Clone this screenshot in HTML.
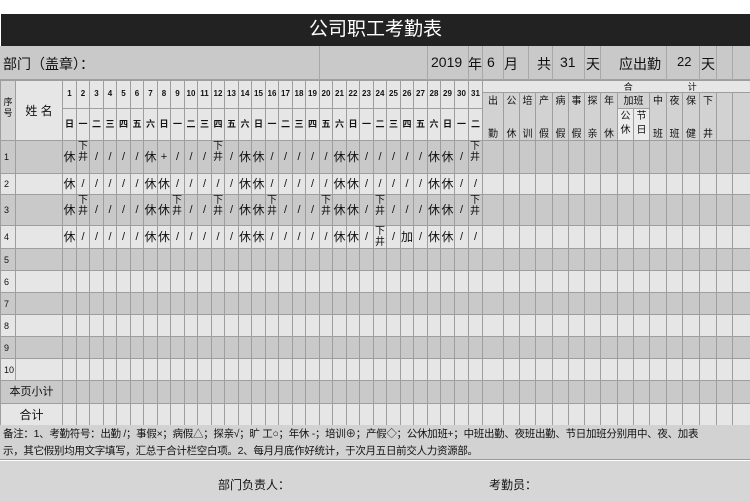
<!DOCTYPE html>
<html><head><meta charset="utf-8"><style>
*{margin:0;padding:0;box-sizing:border-box}
body{width:750px;height:501px;background:#fff;position:relative;overflow:hidden;font-family:"Liberation Sans","Noto Sans CJK SC",sans-serif;color:#111}
.title{position:absolute;top:14px;left:1px;width:749px;height:32px;background:#222;color:#fff;font-size:19px;text-align:center;line-height:32px}
.dept{position:absolute;top:46px;left:0;width:750px;height:34px;background:#c9c9c9;border-bottom:1px solid #a0a0a0}
.dept span{position:absolute;top:8px;font-size:14px}
.dept i{position:absolute;top:0;height:34px;border-left:1px solid #a8a8a8}
table{position:absolute;top:80px;left:0;width:750px;border-collapse:collapse;table-layout:fixed}
td{border:1px solid #9e9e9e;padding:0;text-align:center;font-size:11px;white-space:nowrap;overflow:hidden;line-height:12px}
tr.d td{background:#c9c9c9}
tr.l td{background:#e6e6e6}
.h td{background:#e6e6e6}
.num{font-size:8px;font-weight:bold}
.wk{font-size:9px;font-weight:bold}
.sm{background:#d2d2d2!important;font-size:10px;vertical-align:top}
.sm2{font-size:10px;line-height:11px;vertical-align:top;padding-top:3px}
.n{font-size:9px;text-align:left;padding-left:3px}
.x{font-size:10px;line-height:11px;vertical-align:top;text-align:left;padding-left:1px}
.v{font-size:12px}
.notes{position:absolute;top:425px;left:0;width:750px;height:35px;background:#d2d2d2;border-bottom:1px solid #999;font-size:10.5px;letter-spacing:-0.3px;line-height:17px;padding-left:3px;padding-top:1px;white-space:nowrap;overflow:hidden}
.foot{position:absolute;top:461px;left:0;width:750px;height:40px;background:#d6d6d6;font-size:12px}
.foot span{position:absolute;top:15px}
</style></head><body>
<div class="title">公司职工考勤表</div>
<div class="dept">
<span style="left:3px">部门（盖章）：</span>
<i style="left:319px"></i><i style="left:427px"></i><i style="left:468px"></i><i style="left:482px"></i><i style="left:503px"></i><i style="left:528px"></i><i style="left:552px"></i><i style="left:584px"></i><i style="left:600px"></i><i style="left:666px"></i><i style="left:699px"></i><i style="left:716px"></i><i style="left:732px"></i>
<span style="left:431px">2019</span><span style="left:468px">年</span><span style="left:487px">6</span><span style="left:504px">月</span><span style="left:537px">共</span><span style="left:560px">31</span><span style="left:586px">天</span><span style="left:619px">应出勤</span><span style="left:677px;font-size:13px">22</span><span style="left:701px">天</span>
</div>
<table>
<colgroup><col style="width:15px"><col style="width:47px">
<col style="width:14px"><col style="width:13px"><col style="width:14px"><col style="width:13px"><col style="width:14px"><col style="width:13px"><col style="width:14px"><col style="width:13px"><col style="width:14px"><col style="width:13px"><col style="width:14px"><col style="width:13px"><col style="width:14px"><col style="width:13px"><col style="width:14px"><col style="width:13px"><col style="width:14px"><col style="width:13px"><col style="width:14px"><col style="width:13px"><col style="width:14px"><col style="width:13px"><col style="width:14px"><col style="width:13px"><col style="width:14px"><col style="width:13px"><col style="width:14px"><col style="width:13px"><col style="width:14px"><col style="width:14px"><col style="width:14px">
<col style="width:21px"><col style="width:16px"><col style="width:16px"><col style="width:17px"><col style="width:16px"><col style="width:16px"><col style="width:16px"><col style="width:17px"><col style="width:16px"><col style="width:16px"><col style="width:17px"><col style="width:16px"><col style="width:17px"><col style="width:17px"><col style="width:16px"><col style="width:18px"></colgroup>
<tr class="h" style="height:12px"><td rowspan="3" style="font-size:9px;line-height:11px;background:#d6d6d6;vertical-align:top;padding-top:16px">序<br>号</td><td rowspan="3" style="font-size:12px">姓 名</td>
<td rowspan="2" class="num">1</td><td rowspan="2" class="num">2</td><td rowspan="2" class="num">3</td><td rowspan="2" class="num">4</td><td rowspan="2" class="num">5</td><td rowspan="2" class="num">6</td><td rowspan="2" class="num">7</td><td rowspan="2" class="num">8</td><td rowspan="2" class="num">9</td><td rowspan="2" class="num">10</td><td rowspan="2" class="num">11</td><td rowspan="2" class="num">12</td><td rowspan="2" class="num">13</td><td rowspan="2" class="num">14</td><td rowspan="2" class="num">15</td><td rowspan="2" class="num">16</td><td rowspan="2" class="num">17</td><td rowspan="2" class="num">18</td><td rowspan="2" class="num">19</td><td rowspan="2" class="num">20</td><td rowspan="2" class="num">21</td><td rowspan="2" class="num">22</td><td rowspan="2" class="num">23</td><td rowspan="2" class="num">24</td><td rowspan="2" class="num">25</td><td rowspan="2" class="num">26</td><td rowspan="2" class="num">27</td><td rowspan="2" class="num">28</td><td rowspan="2" class="num">29</td><td rowspan="2" class="num">30</td><td rowspan="2" class="num">31</td>
<td colspan="16" style="font-size:9px;line-height:10px;letter-spacing:0">&nbsp;&nbsp;&nbsp;&nbsp;&nbsp;&nbsp;&nbsp;&nbsp;&nbsp;&nbsp;&nbsp;&nbsp;&nbsp;&nbsp;&nbsp;&nbsp;&nbsp;&nbsp;&nbsp;&nbsp;&nbsp;&nbsp;&nbsp;&nbsp;&nbsp;&nbsp;&nbsp;&nbsp;&nbsp;&nbsp;&nbsp;&nbsp;&nbsp;&nbsp;&nbsp;合&nbsp;&nbsp;&nbsp;&nbsp;&nbsp;&nbsp;&nbsp;&nbsp;&nbsp;&nbsp;&nbsp;&nbsp;&nbsp;&nbsp;&nbsp;&nbsp;&nbsp;&nbsp;&nbsp;&nbsp;&nbsp;&nbsp;计</td></tr>
<tr class="h" style="height:15px">
<td rowspan="2" class="sm sm2">出<br><br><br>勤</td><td rowspan="2" class="sm sm2">公<br><br><br>休</td><td rowspan="2" class="sm sm2">培<br><br><br>训</td><td rowspan="2" class="sm sm2">产<br><br><br>假</td><td rowspan="2" class="sm sm2">病<br><br><br>假</td><td rowspan="2" class="sm sm2">事<br><br><br>假</td><td rowspan="2" class="sm sm2">探<br><br><br>亲</td><td rowspan="2" class="sm sm2">年<br><br><br>休</td><td colspan="2" class="sm sm2">加班</td><td rowspan="2" class="sm sm2">中<br><br><br>班</td><td rowspan="2" class="sm sm2">夜<br><br><br>班</td><td rowspan="2" class="sm sm2">保<br><br><br>健</td><td rowspan="2" class="sm sm2">下<br><br><br>井</td><td rowspan="2" class="sm"></td><td rowspan="2" class="sm"></td></tr>
<tr class="h" style="height:31px">
<td class="wk">日</td><td class="wk">一</td><td class="wk">二</td><td class="wk">三</td><td class="wk">四</td><td class="wk">五</td><td class="wk">六</td><td class="wk">日</td><td class="wk">一</td><td class="wk">二</td><td class="wk">三</td><td class="wk">四</td><td class="wk">五</td><td class="wk">六</td><td class="wk">日</td><td class="wk">一</td><td class="wk">二</td><td class="wk">三</td><td class="wk">四</td><td class="wk">五</td><td class="wk">六</td><td class="wk">日</td><td class="wk">一</td><td class="wk">二</td><td class="wk">三</td><td class="wk">四</td><td class="wk">五</td><td class="wk">六</td><td class="wk">日</td><td class="wk">一</td><td class="wk">二</td>
<td style="font-size:10px;line-height:14px;background:#ececec">公<br>休</td><td style="font-size:10px;line-height:14px;background:#ececec">节<br>日</td></tr>
<tr class="d" style="height:33px"><td class="n">1</td><td></td>
<td class="v">休</td><td class="x">下<br>井</td><td>/</td><td>/</td><td>/</td><td>/</td><td class="v">休</td><td>+</td><td>/</td><td>/</td><td>/</td><td class="x">下<br>井</td><td>/</td><td class="v">休</td><td class="v">休</td><td>/</td><td>/</td><td>/</td><td>/</td><td>/</td><td class="v">休</td><td class="v">休</td><td>/</td><td>/</td><td>/</td><td>/</td><td>/</td><td class="v">休</td><td class="v">休</td><td>/</td><td class="x">下<br>井</td>
<td></td><td></td><td></td><td></td><td></td><td></td><td></td><td></td><td></td><td></td><td></td><td></td><td></td><td></td><td></td><td></td></tr>
<tr class="l" style="height:21px"><td class="n">2</td><td></td>
<td class="v">休</td><td>/</td><td>/</td><td>/</td><td>/</td><td>/</td><td class="v">休</td><td class="v">休</td><td>/</td><td>/</td><td>/</td><td>/</td><td>/</td><td class="v">休</td><td class="v">休</td><td>/</td><td>/</td><td>/</td><td>/</td><td>/</td><td class="v">休</td><td class="v">休</td><td>/</td><td>/</td><td>/</td><td>/</td><td>/</td><td class="v">休</td><td class="v">休</td><td>/</td><td>/</td>
<td></td><td></td><td></td><td></td><td></td><td></td><td></td><td></td><td></td><td></td><td></td><td></td><td></td><td></td><td></td><td></td></tr>
<tr class="d" style="height:31px"><td class="n">3</td><td></td>
<td class="v">休</td><td class="x">下<br>井</td><td>/</td><td>/</td><td>/</td><td>/</td><td class="v">休</td><td class="v">休</td><td class="x">下<br>井</td><td>/</td><td>/</td><td class="x">下<br>井</td><td>/</td><td class="v">休</td><td class="v">休</td><td class="x">下<br>井</td><td>/</td><td>/</td><td>/</td><td class="x">下<br>井</td><td class="v">休</td><td class="v">休</td><td>/</td><td class="x">下<br>井</td><td>/</td><td>/</td><td>/</td><td class="v">休</td><td class="v">休</td><td>/</td><td class="x">下<br>井</td>
<td></td><td></td><td></td><td></td><td></td><td></td><td></td><td></td><td></td><td></td><td></td><td></td><td></td><td></td><td></td><td></td></tr>
<tr class="l" style="height:22px"><td class="n">4</td><td></td>
<td class="v">休</td><td>/</td><td>/</td><td>/</td><td>/</td><td>/</td><td class="v">休</td><td class="v">休</td><td>/</td><td>/</td><td>/</td><td>/</td><td>/</td><td class="v">休</td><td class="v">休</td><td>/</td><td>/</td><td>/</td><td>/</td><td>/</td><td class="v">休</td><td class="v">休</td><td>/</td><td class="x">下<br>井</td><td>/</td><td class="v">加</td><td>/</td><td class="v">休</td><td class="v">休</td><td>/</td><td>/</td>
<td></td><td></td><td></td><td></td><td></td><td></td><td></td><td></td><td></td><td></td><td></td><td></td><td></td><td></td><td></td><td></td></tr>
<tr class="d" style="height:22px"><td class="n">5</td><td></td><td></td><td></td><td></td><td></td><td></td><td></td><td></td><td></td><td></td><td></td><td></td><td></td><td></td><td></td><td></td><td></td><td></td><td></td><td></td><td></td><td></td><td></td><td></td><td></td><td></td><td></td><td></td><td></td><td></td><td></td><td></td><td></td><td></td><td></td><td></td><td></td><td></td><td></td><td></td><td></td><td></td><td></td><td></td><td></td><td></td><td></td><td></td></tr>
<tr class="l" style="height:22px"><td class="n">6</td><td></td><td></td><td></td><td></td><td></td><td></td><td></td><td></td><td></td><td></td><td></td><td></td><td></td><td></td><td></td><td></td><td></td><td></td><td></td><td></td><td></td><td></td><td></td><td></td><td></td><td></td><td></td><td></td><td></td><td></td><td></td><td></td><td></td><td></td><td></td><td></td><td></td><td></td><td></td><td></td><td></td><td></td><td></td><td></td><td></td><td></td><td></td><td></td></tr>
<tr class="d" style="height:22px"><td class="n">7</td><td></td><td></td><td></td><td></td><td></td><td></td><td></td><td></td><td></td><td></td><td></td><td></td><td></td><td></td><td></td><td></td><td></td><td></td><td></td><td></td><td></td><td></td><td></td><td></td><td></td><td></td><td></td><td></td><td></td><td></td><td></td><td></td><td></td><td></td><td></td><td></td><td></td><td></td><td></td><td></td><td></td><td></td><td></td><td></td><td></td><td></td><td></td><td></td></tr>
<tr class="l" style="height:22px"><td class="n">8</td><td></td><td></td><td></td><td></td><td></td><td></td><td></td><td></td><td></td><td></td><td></td><td></td><td></td><td></td><td></td><td></td><td></td><td></td><td></td><td></td><td></td><td></td><td></td><td></td><td></td><td></td><td></td><td></td><td></td><td></td><td></td><td></td><td></td><td></td><td></td><td></td><td></td><td></td><td></td><td></td><td></td><td></td><td></td><td></td><td></td><td></td><td></td><td></td></tr>
<tr class="d" style="height:22px"><td class="n">9</td><td></td><td></td><td></td><td></td><td></td><td></td><td></td><td></td><td></td><td></td><td></td><td></td><td></td><td></td><td></td><td></td><td></td><td></td><td></td><td></td><td></td><td></td><td></td><td></td><td></td><td></td><td></td><td></td><td></td><td></td><td></td><td></td><td></td><td></td><td></td><td></td><td></td><td></td><td></td><td></td><td></td><td></td><td></td><td></td><td></td><td></td><td></td><td></td></tr>
<tr class="l" style="height:22px"><td class="n">10</td><td></td><td></td><td></td><td></td><td></td><td></td><td></td><td></td><td></td><td></td><td></td><td></td><td></td><td></td><td></td><td></td><td></td><td></td><td></td><td></td><td></td><td></td><td></td><td></td><td></td><td></td><td></td><td></td><td></td><td></td><td></td><td></td><td></td><td></td><td></td><td></td><td></td><td></td><td></td><td></td><td></td><td></td><td></td><td></td><td></td><td></td><td></td><td></td></tr>
<tr class="d" style="height:23px"><td colspan="2" style="font-size:11px">本页小计</td><td></td><td></td><td></td><td></td><td></td><td></td><td></td><td></td><td></td><td></td><td></td><td></td><td></td><td></td><td></td><td></td><td></td><td></td><td></td><td></td><td></td><td></td><td></td><td></td><td></td><td></td><td></td><td></td><td></td><td></td><td></td><td></td><td></td><td></td><td></td><td></td><td></td><td></td><td></td><td></td><td></td><td></td><td></td><td></td><td></td><td></td><td></td></tr>
<tr class="l" style="height:22px"><td colspan="2" style="font-size:12px">合计</td><td></td><td></td><td></td><td></td><td></td><td></td><td></td><td></td><td></td><td></td><td></td><td></td><td></td><td></td><td></td><td></td><td></td><td></td><td></td><td></td><td></td><td></td><td></td><td></td><td></td><td></td><td></td><td></td><td></td><td></td><td></td><td></td><td></td><td></td><td></td><td></td><td></td><td></td><td></td><td></td><td></td><td></td><td></td><td></td><td></td><td></td><td></td></tr>
</table>
<div class="notes">备注：1、考勤符号：出勤 /；事假×；病假△；探亲√；旷 工○；年休 -；培训⊕；产假◇；公休加班+；中班出勤、夜班出勤、节日加班分别用中、夜、加表<br>示，其它假别均用文字填写，汇总于合计栏空白项。2、每月月底作好统计，于次月五日前交人力资源部。</div>
<div class="foot"><span style="left:218px">部门负责人：</span><span style="left:489px">考勤员：</span></div>
</body></html>
